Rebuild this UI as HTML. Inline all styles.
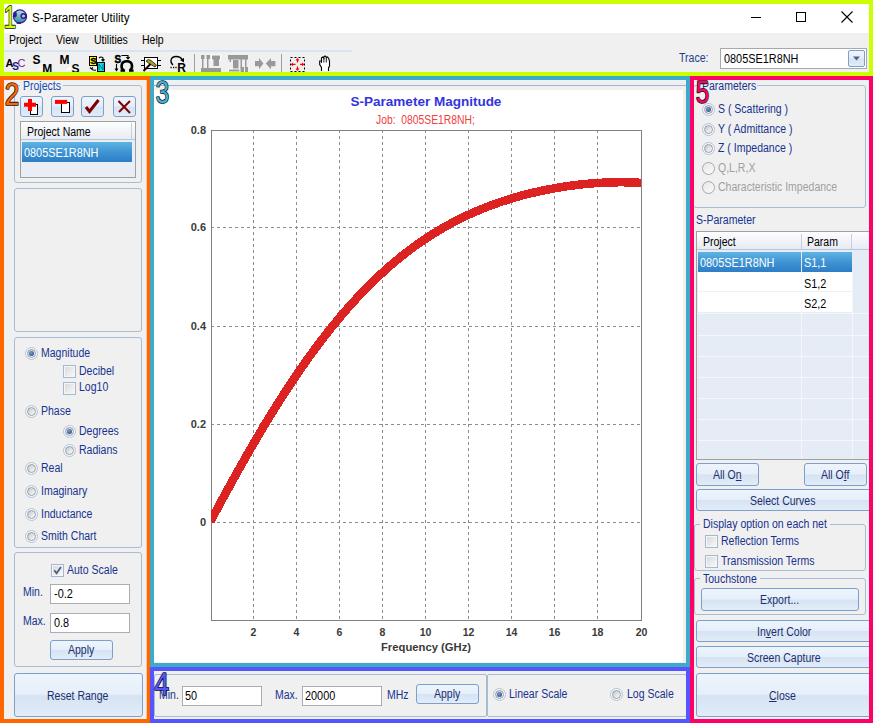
<!DOCTYPE html><html><head><meta charset="utf-8"><style>
*{margin:0;padding:0}
html,body{width:873px;height:723px;overflow:hidden;background:#f0f0f0;position:relative;font-family:"Liberation Sans",sans-serif}
.t{position:absolute;white-space:pre;line-height:1}
u{text-decoration:underline;text-underline-offset:1px}
.r{position:absolute}
.btn{position:absolute;box-sizing:border-box;border:1px solid #7c9fcc;border-radius:3px;
 background:linear-gradient(to bottom,#edf4fc 0%,#e6effa 48%,#d5e3f3 52%,#e3ecf8 100%)}
.radio{position:absolute;width:13px;height:13px;border-radius:50%;box-sizing:border-box;border:1px solid #b0c4dc;background:#f6f8fb}
.radio::after{content:"";position:absolute;left:1px;top:1px;width:9px;height:9px;border-radius:50%;box-sizing:border-box;border:1px solid #9a9ea4;background:linear-gradient(135deg,#c2c4c7 0%,#e4e5e6 55%,#fbfbfb 100%)}
.radio.dis{border:1.3px solid #a8a8a8;background:linear-gradient(135deg,#e6e6e6,#fbfbfb)}
.radio.dis::after{display:none}
.radio.on::before{content:"";position:absolute;z-index:2;left:3px;top:3px;width:5px;height:5px;border-radius:50%;background:radial-gradient(circle at 40% 35%,#7b9ccc 0,#3c64a4 60%,#24407a 100%)}
.chk{position:absolute;width:13px;height:13px;box-sizing:border-box;border:1px solid #a3b8d2;
 background:linear-gradient(135deg,#d8d8d8 0%,#f3f3f3 80%);box-shadow:inset 0 0 0 1px #f6f6f6}
.tb{position:absolute;box-sizing:border-box;border:1px solid #abadb3;background:#fff}
.ov{position:absolute;box-sizing:border-box}
</style></head><body>
<div class="r" style="left:0px;top:0px;width:873px;height:33px;background:#fff"></div>
<svg class="r" style="left:0;top:0" width="40" height="40">
<defs><linearGradient id="gl" x1="0" y1="0" x2="0" y2="1"><stop offset="0" stop-color="#b4e0e4"/><stop offset="1" stop-color="#2a8a98"/></linearGradient></defs>
<circle cx="20" cy="16.5" r="6.6" fill="url(#gl)" stroke="#3a1690" stroke-width="1.1"/>
<ellipse cx="15" cy="14.5" rx="1.8" ry="3" fill="#3a1690"/>
<circle cx="23.5" cy="16" r="2.3" fill="#9ad4dc" stroke="#3a1690" stroke-width="1.5"/>
<ellipse cx="18.8" cy="23" rx="2.6" ry="1.1" fill="#3a1690"/>
</svg>
<div class="t " style="left:32.0px;top:12.00px;font-size:12px;color:#000;transform:scaleX(0.97);transform-origin:0 0;">S-Parameter Utility</div>
<div class="r" style="left:751px;top:17px;width:10px;height:1px;background:#000"></div>
<div class="r" style="left:796px;top:12px;width:10px;height:10px;border:1px solid #000;box-sizing:border-box"></div>
<svg class="r" style="left:841px;top:11px" width="12" height="12" viewBox="0 0 12 12"><path d="M0.5 0.5L11.5 11.5M11.5 0.5L0.5 11.5" stroke="#000" stroke-width="1.1"/></svg>
<div class="t " style="left:8.5px;top:34.00px;font-size:12px;color:#000;transform:scaleX(0.876);transform-origin:0 0;">Project</div>
<div class="t " style="left:56.0px;top:34.00px;font-size:12px;color:#000;transform:scaleX(0.876);transform-origin:0 0;">View</div>
<div class="t " style="left:94.0px;top:34.00px;font-size:12px;color:#000;transform:scaleX(0.876);transform-origin:0 0;">Utilities</div>
<div class="t " style="left:142.0px;top:34.00px;font-size:12px;color:#000;transform:scaleX(0.876);transform-origin:0 0;">Help</div>
<div class="r" style="left:4px;top:50px;width:348px;height:2px;background:#d6e5f5"></div>
<svg class="r" style="left:0;top:52px" width="352" height="20" viewBox="0 52 352 20">
<g font-family="Liberation Sans" font-weight="bold">
<text x="5.6" y="67.2" font-size="11" fill="#000" font-weight="normal" style="font-weight:bold">A</text>
<text x="12.2" y="69.6" font-size="10" fill="#1a1a8c" style="font-weight:bold">S</text>
<text x="17.6" y="67.2" font-size="11" fill="#7a1a9a" font-weight="normal" style="font-weight:normal">C</text>
<text x="32.4" y="63.8" font-size="12" fill="#000">S</text>
<path d="M38 70 L43 66 L43 70Z" fill="#fff"/>
<text x="42.2" y="72.6" font-size="12" fill="#000">M</text>
<text x="59.6" y="63.8" font-size="12" fill="#000">M</text>
<path d="M66 70 L71 66 L71 70Z" fill="#fff"/>
<text x="71.4" y="72.6" font-size="12" fill="#000">S</text>
</g>
<rect x="89.5" y="56.5" width="7" height="9" fill="#ffff00" stroke="#000"/>
<text x="90.2" y="64.4" font-size="9.5" font-family="Liberation Sans" font-weight="bold" fill="#000" stroke="#000" stroke-width="0.4">S</text>
<rect x="97.5" y="62.5" width="7" height="9" fill="#00e8f0" stroke="#000"/>
<path d="M99 64 L99 70 M99 64 L103 70 M103 64 L103 70" stroke="#0a6a7a" stroke-width="1" fill="none"/>
<path d="M99 58 Q101 56 103 58 L103 60.5 M101.5 59.5 L103 61 L104.5 59.5" stroke="#000" stroke-width="1.1" fill="none"/>
<path d="M96 70 Q93 71 91.5 68.5 M90 67.5 L91.5 69 L93 67.5" stroke="#000" stroke-width="1.1" fill="none"/>
<text x="114.6" y="63" font-size="10" font-family="Liberation Sans" font-weight="bold" fill="#000" stroke="#000" stroke-width="0.5">S</text>
<path d="M121.5 55.5 L128 55.5 L128 58 M126.3 57 L128 59 L129.7 57" stroke="#000" stroke-width="1.1" fill="none"/>
<path d="M116.5 64 L116.5 70 M115 68.5 L116.5 70.5 L118 68.5" stroke="#000" stroke-width="1.1" fill="none"/>
<path d="M124 70.3 C120.5 68.5 120.3 61.3 126.8 61.3 C133.3 61.3 133.1 68.5 129.6 70.3" stroke="#000" stroke-width="2.6" fill="none"/><path d="M120.5 70.6h4.6M129 70.6h4.6" stroke="#000" stroke-width="2.4"/>
<path d="M141 60.5h3M141 65.5h3M158 60.5h3M158 65.5h3" stroke="#000" stroke-width="1"/>
<rect x="144.5" y="57.5" width="13" height="11" fill="#fff" stroke="#000"/>
<path d="M146 61 L148.5 59.5 L151 60.5 L156.5 65 L155 67 L151.5 65 L149 63.5 Z" fill="#a8a020" stroke="#000" stroke-width="0.7"/>
<path d="M143.5 71 L150.5 64" stroke="#000" stroke-width="2"/>
<path d="M143.5 71 L150.5 64" stroke="#c00000" stroke-width="0.8" stroke-dasharray="1 1"/>
<path d="M173 65 C169.5 62 170.5 56.5 176 56.5 C179.5 56.5 181.5 58 182.5 60" stroke="#000" stroke-width="1.3" fill="none"/>
<path d="M180 60 L184 62.5 L184 58Z" fill="#000"/>
<path d="M170.5 67.5h1.2M173 67.5h1.2M175.4 67.5h1.2" stroke="#000" stroke-width="1.5"/>
<text x="177.3" y="71.8" font-size="12" font-family="Liberation Sans" font-weight="bold" fill="#000">R</text>
<rect x="194" y="54" width="1" height="18" fill="#a0a0a0"/>
<g fill="#999">
<rect x="201" y="55" width="3.5" height="4"/><rect x="206.5" y="55" width="3.5" height="4"/>
<rect x="211.5" y="55" width="9" height="5" stroke="#fff" stroke-width="1"/>
<rect x="202" y="59" width="1.5" height="9"/><rect x="207" y="59" width="1.5" height="9"/>
<rect x="213.5" y="59" width="5.5" height="7"/>
<rect x="201" y="68" width="20" height="4"/>
<rect x="228" y="55" width="20" height="4.5"/>
<rect x="229.5" y="59" width="1.5" height="3" /><rect x="233" y="60" width="5.5" height="9"/>
<rect x="240.5" y="59" width="1.5" height="9"/><rect x="245" y="59" width="1.5" height="8"/>
<rect x="228.5" y="69" width="11.5" height="3" stroke="#fff" stroke-width="1"/>
<rect x="240.5" y="67" width="3.5" height="5"/><rect x="245" y="67" width="3" height="5"/>
<path d="M255 61 L259 61 L259 58 L263.4 63.6 L259 69.3 L259 66.3 L255 66.3Z"/>
<path d="M275.4 61 L271 61 L271 58 L265.8 63.6 L271 69.3 L271 66.3 L275.4 66.3Z"/>
</g>
<rect x="281" y="54" width="1" height="18" fill="#a0a0a0"/>
<rect x="290.5" y="57.5" width="14" height="14" fill="none" stroke="#000" stroke-width="1" stroke-dasharray="2 2"/>
<g stroke="#f00" stroke-width="1.2" fill="#f00">
<path d="M297.5 59v3.5M291.5 64.4h4M300 64.4h4M297.5 66.5v3.5"/>
</g>
<g fill="#f00"><path d="M295.5 60.5L297.5 58L299.5 60.5Z M295.5 68.5L297.5 71L299.5 68.5Z M293 62.5L290.8 64.4L293 66.3Z M302 62.5L304.3 64.4L302 66.3Z"/></g>
<path d="M321.5 71 L321.5 67.5 L319.7 64.5 L319.7 61 L321.5 61 L321.5 58 L322.7 57 L323.9 58 L323.9 56.7 L325.1 56 L326.3 57 L326.3 57.5 L327.5 57 L328.7 58.5 L329.5 61 L329.5 66 L328.5 68 L328.5 71" stroke="#000" stroke-width="1.1" fill="#fff"/>
<path d="M323.9 58v4.5M326.3 57.5v5M321.5 61v2" stroke="#000" stroke-width="0.9"/>
</svg>
<div class="t " style="left:678.5px;top:52.00px;font-size:12px;color:#1c3c8c;transform:scaleX(0.876);transform-origin:0 0;">Trace:</div>
<div class="r" style="left:720px;top:48px;width:147px;height:21px;border:1px solid #a9a9a9;background:#fff;box-sizing:border-box"></div>
<div class="t " style="left:723.8px;top:53.00px;font-size:12px;color:#000;transform:scaleX(0.9075000000000001);transform-origin:0 0;">0805SE1R8NH</div>
<div class="btn" style="left:848px;top:50px;width:17px;height:17px;border-radius:2px"></div>
<svg class="r" style="left:852px;top:56px" width="9" height="5"><path d="M1 0.5h7L4.5 4.5Z" fill="#4d6185"/></svg>
<div class="r" style="left:14px;top:85px;width:128px;height:98px;border:1px solid #a6bbd6;border-radius:3px;box-sizing:border-box;"></div>
<div class="t " style="left:23.0px;top:80.00px;font-size:12px;color:#1c50b4;transform:scaleX(0.876);transform-origin:0 0;">Projects</div>
<div class="r" style="left:20px;top:82px;width:43px;height:7px;background:#f0f0f0"></div>
<div class="t " style="left:23.0px;top:80.00px;font-size:12px;color:#1c50b4;transform:scaleX(0.876);transform-origin:0 0;">Projects</div>
<div class="btn" style="left:20px;top:96px;width:23px;height:21px"></div>
<div class="btn" style="left:51px;top:96px;width:23px;height:21px"></div>
<div class="btn" style="left:81px;top:96px;width:23px;height:21px"></div>
<div class="btn" style="left:113px;top:96px;width:23px;height:21px"></div>
<svg class="r" style="left:0;top:0" width="150" height="180">
<rect x="30.5" y="104.5" width="7" height="10" fill="#fff" stroke="#000"/>
<path d="M24 104.8h12M30 99v12" stroke="#f00" stroke-width="4"/>
<rect x="61.5" y="102.5" width="8" height="10" fill="#fff" stroke="#000"/>
<path d="M55 101.9h12.2" stroke="#f00" stroke-width="4"/>
<path d="M86 107 L89.5 111.5 L98.5 100" stroke="#800000" stroke-width="3" fill="none"/>
<path d="M118.5 101 L130 113 M130 101 L119 112" stroke="#800000" stroke-width="2" fill="none"/>
</svg>
<div class="r" style="left:20px;top:121px;width:116px;height:57px;border:1px solid #a0a0a0;background:#e9eef6;box-sizing:border-box"></div>
<div class="r" style="left:21px;top:122px;width:114px;height:18px;background:linear-gradient(#fdfdfe,#e8ecf3);border-bottom:1px solid #b9c6d8;box-sizing:border-box"></div>
<div class="r" style="left:131px;top:123px;width:1px;height:16px;background:#c5cfdc"></div>
<div class="t " style="left:27.0px;top:126.00px;font-size:12px;color:#000;transform:scaleX(0.876);transform-origin:0 0;">Project Name</div>
<div class="r" style="left:22px;top:142px;width:110px;height:20px;background:linear-gradient(#5fb4e2,#3f94d3 50%,#2d7dc7)"></div>
<div class="t " style="left:24.2px;top:147.00px;font-size:12px;color:#fff;transform:scaleX(0.9075000000000001);transform-origin:0 0;">0805SE1R8NH</div>
<div class="r" style="left:14px;top:188px;width:128px;height:144px;border:1px solid #a6bbd6;border-radius:3px;box-sizing:border-box;"></div>
<div class="r" style="left:14px;top:337px;width:128px;height:211px;border:1px solid #a6bbd6;border-radius:3px;box-sizing:border-box;"></div>
<div class="radio on" style="left:24.9px;top:346.8px"></div>
<div class="t " style="left:41.0px;top:347.00px;font-size:12px;color:#16338f;transform:scaleX(0.876);transform-origin:0 0;">Magnitude</div>
<div class="chk" style="left:63px;top:365px"></div>
<div class="t " style="left:78.8px;top:365.00px;font-size:12px;color:#16338f;transform:scaleX(0.876);transform-origin:0 0;">Decibel</div>
<div class="chk" style="left:63px;top:382px"></div>
<div class="t " style="left:78.8px;top:381.00px;font-size:12px;color:#16338f;transform:scaleX(0.876);transform-origin:0 0;">Log10</div>
<div class="radio" style="left:24.9px;top:405.0px"></div>
<div class="t " style="left:41.0px;top:405.00px;font-size:12px;color:#16338f;transform:scaleX(0.876);transform-origin:0 0;">Phase</div>
<div class="radio on" style="left:62.9px;top:424.5px"></div>
<div class="t " style="left:78.8px;top:425.00px;font-size:12px;color:#16338f;transform:scaleX(0.876);transform-origin:0 0;">Degrees</div>
<div class="radio" style="left:62.9px;top:443.5px"></div>
<div class="t " style="left:78.8px;top:444.00px;font-size:12px;color:#16338f;transform:scaleX(0.876);transform-origin:0 0;">Radians</div>
<div class="radio" style="left:24.9px;top:462.0px"></div>
<div class="t " style="left:41.0px;top:462.00px;font-size:12px;color:#16338f;transform:scaleX(0.876);transform-origin:0 0;">Real</div>
<div class="radio" style="left:24.9px;top:484.8px"></div>
<div class="t " style="left:41.0px;top:485.00px;font-size:12px;color:#16338f;transform:scaleX(0.876);transform-origin:0 0;">Imaginary</div>
<div class="radio" style="left:24.9px;top:507.5px"></div>
<div class="t " style="left:41.0px;top:508.00px;font-size:12px;color:#16338f;transform:scaleX(0.876);transform-origin:0 0;">Inductance</div>
<div class="radio" style="left:24.9px;top:529.8px"></div>
<div class="t " style="left:41.0px;top:530.00px;font-size:12px;color:#16338f;transform:scaleX(0.876);transform-origin:0 0;">Smith Chart</div>
<div class="r" style="left:14px;top:552px;width:128px;height:115px;border:1px solid #a6bbd6;border-radius:3px;box-sizing:border-box;"></div>
<div class="chk" style="left:51px;top:564px"></div>
<svg class="r" style="left:53px;top:566px" width="9" height="9"><path d="M1.2 4.2 L3.6 7.2 L8 1" stroke="#4a5f85" stroke-width="1.8" fill="none"/></svg>
<div class="t " style="left:67.3px;top:564.00px;font-size:12px;color:#16338f;transform:scaleX(0.876);transform-origin:0 0;">Auto Scale</div>
<div class="t " style="left:23.4px;top:586.00px;font-size:12px;color:#16338f;transform:scaleX(0.876);transform-origin:0 0;">Min.</div>
<div class="tb" style="left:50px;top:584px;width:80px;height:20px"></div>
<div class="t " style="left:54.0px;top:588.00px;font-size:12px;color:#000;transform:scaleX(0.9075000000000001);transform-origin:0 0;">-0.2</div>
<div class="t " style="left:23.4px;top:615.00px;font-size:12px;color:#16338f;transform:scaleX(0.876);transform-origin:0 0;">Max.</div>
<div class="tb" style="left:50px;top:613px;width:80px;height:20px"></div>
<div class="t " style="left:53.8px;top:617.00px;font-size:12px;color:#000;transform:scaleX(0.9075000000000001);transform-origin:0 0;">0.8</div>
<div class="btn" style="left:50px;top:640px;width:63px;height:20px;"></div>
<div class="t " style="left:68.0px;top:644.00px;font-size:12px;color:#1c2f6e;transform:scaleX(0.876);transform-origin:0 0;">Apply</div>
<div class="btn" style="left:14px;top:673px;width:129px;height:44px;"></div>
<div class="t " style="left:47.4px;top:690.00px;font-size:12px;color:#1c2f6e;transform:scaleX(0.876);transform-origin:0 0;">Reset Range</div>
<div class="r" style="left:150px;top:76px;width:540px;height:591px;background:#f0f0f0"></div>
<div class="r" style="left:154px;top:85px;width:532px;height:1px;background:#9fb5d5"></div>
<div class="r" style="left:154px;top:90px;width:529px;height:572px;background:#fff"></div>
<div class="t " style="left:350.6px;top:95.37px;font-size:13.5px;color:#3434dc;font-weight:bold;">S-Parameter Magnitude</div>
<div class="t " style="left:375.5px;top:114.00px;font-size:12px;color:#f04040;transform:scaleX(0.8616666666666667);transform-origin:0 0;">Job:  0805SE1R8NH;</div>
<svg class="r" style="left:0;top:0" width="873" height="723">
<path d="M253.5 130V620" stroke="#8c8c8c" stroke-width="1" stroke-dasharray="3 3" />
<path d="M296.5 130V620" stroke="#8c8c8c" stroke-width="1" stroke-dasharray="3 3" />
<path d="M339.5 130V620" stroke="#8c8c8c" stroke-width="1" stroke-dasharray="3 3" />
<path d="M382.5 130V620" stroke="#8c8c8c" stroke-width="1" stroke-dasharray="3 3" />
<path d="M425.5 130V620" stroke="#8c8c8c" stroke-width="1" stroke-dasharray="3 3" />
<path d="M468.5 130V620" stroke="#8c8c8c" stroke-width="1" stroke-dasharray="3 3" />
<path d="M511.5 130V620" stroke="#8c8c8c" stroke-width="1" stroke-dasharray="3 3" />
<path d="M554.5 130V620" stroke="#8c8c8c" stroke-width="1" stroke-dasharray="3 3" />
<path d="M597.5 130V620" stroke="#8c8c8c" stroke-width="1" stroke-dasharray="3 3" />
<path d="M211 227.5H641" stroke="#8c8c8c" stroke-width="1" stroke-dasharray="3 3" />
<path d="M211 326.5H641" stroke="#8c8c8c" stroke-width="1" stroke-dasharray="3 3" />
<path d="M211 424.5H641" stroke="#8c8c8c" stroke-width="1" stroke-dasharray="3 3" />
<path d="M211 522.5H641" stroke="#8c8c8c" stroke-width="1" stroke-dasharray="3 3" />
<rect x="211.5" y="130.5" width="430" height="490" fill="none" stroke="#808080" stroke-width="1"/>
<clipPath id="pc"><rect x="211" y="130" width="430" height="490"/></clipPath>
<path d="M210.27 521.75 L213.02 516.61 L215.76 511.48 L218.51 506.38 L221.25 501.29 L224.00 496.23 L226.75 491.20 L229.49 486.19 L232.24 481.21 L234.99 476.25 L237.73 471.33 L240.48 466.44 L243.22 461.58 L245.97 456.75 L248.72 451.96 L251.46 447.20 L254.21 442.48 L256.96 437.80 L259.70 433.15 L262.45 428.55 L265.19 423.98 L267.94 419.46 L270.69 414.98 L273.43 410.53 L276.18 406.14 L278.93 401.78 L281.67 397.47 L284.42 393.21 L287.16 388.99 L289.91 384.82 L292.66 380.69 L295.40 376.61 L298.15 372.57 L300.90 368.59 L303.64 364.65 L306.39 360.76 L309.13 356.92 L311.88 353.13 L314.63 349.38 L317.37 345.69 L320.12 342.05 L322.87 338.45 L325.61 334.91 L328.36 331.41 L331.10 327.96 L333.85 324.57 L336.60 321.22 L339.34 317.93 L342.09 314.68 L344.84 311.48 L347.58 308.33 L350.33 305.24 L353.07 302.19 L355.82 299.19 L358.57 296.24 L361.31 293.34 L364.06 290.49 L366.81 287.68 L369.55 284.93 L372.30 282.22 L375.04 279.56 L377.79 276.95 L380.54 274.39 L383.28 271.87 L386.03 269.40 L388.78 266.97 L391.52 264.59 L394.27 262.26 L397.01 259.97 L399.76 257.73 L402.51 255.53 L405.25 253.37 L408.00 251.26 L410.75 249.19 L413.49 247.16 L416.24 245.17 L418.98 243.23 L421.73 241.33 L424.48 239.46 L427.22 237.64 L429.97 235.86 L432.72 234.12 L435.46 232.41 L438.21 230.74 L440.95 229.12 L443.70 227.52 L446.45 225.97 L449.19 224.45 L451.94 222.96 L454.69 221.51 L457.43 220.10 L460.18 218.72 L462.92 217.37 L465.67 216.06 L468.42 214.77 L471.16 213.52 L473.91 212.30 L476.66 211.11 L479.40 209.96 L482.15 208.83 L484.89 207.73 L487.64 206.66 L490.39 205.61 L493.13 204.60 L495.88 203.61 L498.63 202.65 L501.37 201.72 L504.12 200.81 L506.86 199.93 L509.61 199.07 L512.36 198.24 L515.10 197.43 L517.85 196.64 L520.60 195.88 L523.34 195.14 L526.09 194.43 L528.83 193.74 L531.58 193.07 L534.33 192.42 L537.07 191.79 L539.82 191.18 L542.57 190.60 L545.31 190.03 L548.06 189.49 L550.80 188.96 L553.55 188.46 L556.30 187.97 L559.04 187.51 L561.79 187.06 L564.54 186.64 L567.28 186.23 L570.03 185.84 L572.77 185.48 L575.52 185.13 L578.27 184.80 L581.01 184.49 L583.76 184.20 L586.51 183.93 L589.25 183.67 L592.00 183.44 L594.74 183.23 L597.49 183.04 L600.24 182.86 L602.98 182.71 L605.73 182.58 L608.48 182.47 L611.22 182.38 L613.97 182.31 L616.71 182.27 L619.46 182.24 L622.21 182.24 L624.95 182.27 L627.70 182.31 L630.45 182.38 L633.19 182.48 L635.94 182.60 L638.68 182.75 L641.43 182.93 L644.18 183.13 L646.92 183.36" stroke="#dd2222" stroke-width="8.5" fill="none" clip-path="url(#pc)" shape-rendering="crispEdges"/>
</svg>
<div class="t" style="left:150px;width:56px;text-align:right;top:124.7px;font-size:11px;font-weight:bold;color:#3a3a3a">0.8</div>
<div class="t" style="left:150px;width:56px;text-align:right;top:221.7px;font-size:11px;font-weight:bold;color:#3a3a3a">0.6</div>
<div class="t" style="left:150px;width:56px;text-align:right;top:320.7px;font-size:11px;font-weight:bold;color:#3a3a3a">0.4</div>
<div class="t" style="left:150px;width:56px;text-align:right;top:418.7px;font-size:11px;font-weight:bold;color:#3a3a3a">0.2</div>
<div class="t" style="left:150px;width:56px;text-align:right;top:516.7px;font-size:11px;font-weight:bold;color:#3a3a3a">0</div>
<div class="t" style="left:233px;width:41px;text-align:center;top:627.1px;font-size:10.5px;font-weight:bold;color:#3a3a3a">2</div>
<div class="t" style="left:276px;width:41px;text-align:center;top:627.1px;font-size:10.5px;font-weight:bold;color:#3a3a3a">4</div>
<div class="t" style="left:319px;width:41px;text-align:center;top:627.1px;font-size:10.5px;font-weight:bold;color:#3a3a3a">6</div>
<div class="t" style="left:362px;width:41px;text-align:center;top:627.1px;font-size:10.5px;font-weight:bold;color:#3a3a3a">8</div>
<div class="t" style="left:405px;width:41px;text-align:center;top:627.1px;font-size:10.5px;font-weight:bold;color:#3a3a3a">10</div>
<div class="t" style="left:448px;width:41px;text-align:center;top:627.1px;font-size:10.5px;font-weight:bold;color:#3a3a3a">12</div>
<div class="t" style="left:491px;width:41px;text-align:center;top:627.1px;font-size:10.5px;font-weight:bold;color:#3a3a3a">14</div>
<div class="t" style="left:534px;width:41px;text-align:center;top:627.1px;font-size:10.5px;font-weight:bold;color:#3a3a3a">16</div>
<div class="t" style="left:577px;width:41px;text-align:center;top:627.1px;font-size:10.5px;font-weight:bold;color:#3a3a3a">18</div>
<div class="t" style="left:621px;width:41px;text-align:center;top:627.1px;font-size:10.5px;font-weight:bold;color:#3a3a3a">20</div>
<div class="t " style="left:381.0px;top:642.28px;font-size:11.25px;color:#3a3a3a;font-weight:bold;">Frequency (GHz)</div>
<div class="r" style="left:154px;top:671px;width:532px;height:48px;background:#f0f0f0"></div>
<div class="r" style="left:154px;top:674px;width:333px;height:43px;border:1px solid #a6bbd6;border-radius:2px;box-sizing:border-box"></div>
<div class="r" style="left:487px;top:674px;width:200px;height:43px;border:1px solid #a6bbd6;border-radius:2px;box-sizing:border-box"></div>
<div class="t " style="left:158.5px;top:689.00px;font-size:12px;color:#16338f;transform:scaleX(0.876);transform-origin:0 0;">Min.</div>
<div class="tb" style="left:182px;top:686px;width:80px;height:20px"></div>
<div class="t " style="left:185.2px;top:690.00px;font-size:12px;color:#000;transform:scaleX(0.9075000000000001);transform-origin:0 0;">50</div>
<div class="t " style="left:275.2px;top:689.00px;font-size:12px;color:#16338f;transform:scaleX(0.876);transform-origin:0 0;">Max.</div>
<div class="tb" style="left:302px;top:686px;width:80px;height:20px"></div>
<div class="t " style="left:304.8px;top:690.00px;font-size:12px;color:#000;transform:scaleX(0.9075000000000001);transform-origin:0 0;">20000</div>
<div class="t " style="left:386.5px;top:689.00px;font-size:12px;color:#16338f;transform:scaleX(0.876);transform-origin:0 0;">MHz</div>
<div class="btn" style="left:416px;top:684px;width:63px;height:20px;"></div>
<div class="t " style="left:433.8px;top:688.00px;font-size:12px;color:#1c2f6e;transform:scaleX(0.876);transform-origin:0 0;">Apply</div>
<div class="radio on" style="left:492.9px;top:687.8px"></div>
<div class="t " style="left:509.3px;top:688.00px;font-size:12px;color:#16338f;transform:scaleX(0.876);transform-origin:0 0;">Linear Scale</div>
<div class="radio" style="left:609.7px;top:687.8px"></div>
<div class="t " style="left:626.5px;top:688.00px;font-size:12px;color:#16338f;transform:scaleX(0.876);transform-origin:0 0;">Log Scale</div>
<div class="r" style="left:693px;top:85px;width:173px;height:123px;border:1px solid #a6bbd6;border-radius:3px;box-sizing:border-box;"></div>
<div class="r" style="left:700px;top:80px;width:57px;height:10px;background:#f0f0f0"></div>
<div class="t " style="left:701.5px;top:80.00px;font-size:12px;color:#16338f;transform:scaleX(0.876);transform-origin:0 0;">Parameters</div>
<div class="radio on" style="left:701.9px;top:102.6px"></div>
<div class="t " style="left:718.2px;top:103.00px;font-size:12px;color:#16338f;transform:scaleX(0.876);transform-origin:0 0;">S ( Scattering )</div>
<div class="radio" style="left:701.9px;top:122.8px"></div>
<div class="t " style="left:718.2px;top:123.00px;font-size:12px;color:#16338f;transform:scaleX(0.876);transform-origin:0 0;">Y ( Admittance )</div>
<div class="radio" style="left:701.9px;top:141.9px"></div>
<div class="t " style="left:718.2px;top:142.00px;font-size:12px;color:#16338f;transform:scaleX(0.876);transform-origin:0 0;">Z ( Impedance )</div>
<div class="radio dis" style="left:701.9px;top:161.5px"></div>
<div class="t " style="left:718.2px;top:162.00px;font-size:12px;color:#a0a0a0;transform:scaleX(0.876);transform-origin:0 0;">Q,L,R,X</div>
<div class="radio dis" style="left:701.9px;top:180.5px"></div>
<div class="t " style="left:718.2px;top:181.00px;font-size:12px;color:#a0a0a0;transform:scaleX(0.876);transform-origin:0 0;">Characteristic Impedance</div>
<div class="t " style="left:696.3px;top:214.00px;font-size:12px;color:#16338f;transform:scaleX(0.876);transform-origin:0 0;">S-Parameter</div>
<div class="r" style="left:696px;top:231px;width:177px;height:229px;border:1px solid #a0a0a0;background:#e6ecf5;box-sizing:border-box"></div>
<div class="r" style="left:697px;top:232px;width:176px;height:18px;background:linear-gradient(#fdfdfe,#e6ebf3);border-bottom:1px solid #b9c6d8;box-sizing:border-box"></div>
<div class="r" style="left:801px;top:234px;width:1px;height:15px;background:#c5cfdc"></div>
<div class="r" style="left:851px;top:234px;width:1px;height:15px;background:#c5cfdc"></div>
<div class="t " style="left:703.0px;top:236.00px;font-size:12px;color:#000;transform:scaleX(0.876);transform-origin:0 0;">Project</div>
<div class="t " style="left:807.2px;top:236.00px;font-size:12px;color:#000;transform:scaleX(0.876);transform-origin:0 0;">Param</div>
<div class="r" style="left:698px;top:252px;width:103px;height:20px;background:linear-gradient(#5fb4e2,#3f94d3 50%,#2d7dc7)"></div>
<div class="r" style="left:802px;top:252px;width:50px;height:20px;background:linear-gradient(#5fb4e2,#3f94d3 50%,#2d7dc7)"></div>
<div class="r" style="left:698px;top:272px;width:103px;height:20px;background:#fff"></div>
<div class="r" style="left:802px;top:272px;width:50px;height:20px;background:#fff"></div>
<div class="r" style="left:698px;top:292px;width:103px;height:20px;background:#fff"></div>
<div class="r" style="left:802px;top:292px;width:50px;height:20px;background:#fff"></div>
<div class="r" style="left:698px;top:291px;width:154px;height:1px;background:#f0f0f0"></div>
<div class="r" style="left:698px;top:313px;width:171px;height:1px;background:#f4f6fa"></div>
<div class="r" style="left:698px;top:335px;width:171px;height:1px;background:#f4f6fa"></div>
<div class="r" style="left:698px;top:356px;width:171px;height:1px;background:#f4f6fa"></div>
<div class="r" style="left:698px;top:377px;width:171px;height:1px;background:#f4f6fa"></div>
<div class="r" style="left:698px;top:398px;width:171px;height:1px;background:#f4f6fa"></div>
<div class="r" style="left:698px;top:419px;width:171px;height:1px;background:#f4f6fa"></div>
<div class="r" style="left:698px;top:440px;width:171px;height:1px;background:#f4f6fa"></div>
<div class="r" style="left:801px;top:272px;width:1px;height:187px;background:#f4f6fa"></div>
<div class="r" style="left:852px;top:272px;width:1px;height:187px;background:#f4f6fa"></div>
<div class="t " style="left:700.3px;top:257.00px;font-size:12px;color:#fff;transform:scaleX(0.9075000000000001);transform-origin:0 0;">0805SE1R8NH</div>
<div class="t " style="left:804.2px;top:257.00px;font-size:12px;color:#fff;transform:scaleX(0.9075000000000001);transform-origin:0 0;">S1,1</div>
<div class="t " style="left:804.2px;top:278.00px;font-size:12px;color:#000;transform:scaleX(0.9075000000000001);transform-origin:0 0;">S1,2</div>
<div class="t " style="left:804.2px;top:298.00px;font-size:12px;color:#000;transform:scaleX(0.9075000000000001);transform-origin:0 0;">S2,2</div>
<div class="btn" style="left:696px;top:463px;width:63px;height:23px;"></div>
<div class="t " style="left:713.0px;top:469.00px;font-size:12px;color:#1c2f6e;transform:scaleX(0.876);transform-origin:0 0;">All O<u>n</u></div>
<div class="btn" style="left:804px;top:463px;width:63px;height:23px;"></div>
<div class="t " style="left:821.0px;top:469.00px;font-size:12px;color:#1c2f6e;transform:scaleX(0.876);transform-origin:0 0;">All O<u>f</u>f</div>
<div class="btn" style="left:696px;top:489px;width:177px;height:22px;"></div>
<div class="t " style="left:750.0px;top:495.00px;font-size:12px;color:#1c2f6e;transform:scaleX(0.876);transform-origin:0 0;">Select Curves</div>
<div class="r" style="left:694px;top:524px;width:172px;height:47px;border:1px solid #a6bbd6;border-radius:3px;box-sizing:border-box;"></div>
<div class="r" style="left:700px;top:518px;width:130px;height:10px;background:#f0f0f0"></div>
<div class="t " style="left:702.8px;top:518.00px;font-size:12px;color:#16338f;transform:scaleX(0.876);transform-origin:0 0;">Display option on each net</div>
<div class="chk" style="left:705px;top:535px"></div>
<div class="t " style="left:721.2px;top:535.00px;font-size:12px;color:#16338f;transform:scaleX(0.876);transform-origin:0 0;">Reflection Terms</div>
<div class="chk" style="left:705px;top:555px"></div>
<div class="t " style="left:721.2px;top:555.00px;font-size:12px;color:#16338f;transform:scaleX(0.876);transform-origin:0 0;">Transmission Terms</div>
<div class="r" style="left:694px;top:578px;width:172px;height:37px;border:1px solid #a6bbd6;border-radius:3px;box-sizing:border-box;"></div>
<div class="r" style="left:700px;top:572px;width:60px;height:10px;background:#f0f0f0"></div>
<div class="t " style="left:702.8px;top:573.00px;font-size:12px;color:#16338f;transform:scaleX(0.876);transform-origin:0 0;">Touchstone</div>
<div class="btn" style="left:701px;top:588px;width:158px;height:23px;"></div>
<div class="t " style="left:760.0px;top:594.00px;font-size:12px;color:#1c2f6e;transform:scaleX(0.876);transform-origin:0 0;">Export...</div>
<div class="btn" style="left:696px;top:620px;width:177px;height:22px;"></div>
<div class="t " style="left:756.6px;top:626.00px;font-size:12px;color:#1c2f6e;transform:scaleX(0.876);transform-origin:0 0;">In<u>v</u>ert Color</div>
<div class="btn" style="left:696px;top:646px;width:177px;height:22px;"></div>
<div class="t " style="left:746.5px;top:652.00px;font-size:12px;color:#1c2f6e;transform:scaleX(0.876);transform-origin:0 0;">Screen Capture</div>
<div class="btn" style="left:696px;top:673px;width:177px;height:44px;"></div>
<div class="t " style="left:769.0px;top:690.00px;font-size:12px;color:#1c2f6e;transform:scaleX(0.876);transform-origin:0 0;"><u>C</u>lose</div>
<div class="ov" style="left:0px;top:0px;width:873px;height:76px;border:4px solid #ccff00"></div>
<div class="ov" style="left:0px;top:76px;width:150px;height:647px;border:4px solid #ff6600"></div>
<div class="r" style="left:146px;top:80px;width:1px;height:639px;background:#f6c8a8"></div>
<div class="r" style="left:146px;top:76px;width:1px;height:4px;background:#ff6600"></div>
<div class="r" style="left:146px;top:719px;width:1px;height:4px;background:#ff6600"></div>
<div class="ov" style="left:150px;top:76px;width:540px;height:591px;border:4px solid #3fa9c9"></div>
<div class="ov" style="left:150px;top:667px;width:540px;height:56px;border:4px solid #5555ff"></div>
<div class="ov" style="left:690px;top:76px;width:183px;height:647px;border:4px solid #ff0066"></div>
<svg class="r" style="left:0;top:0" width="873" height="723"><text transform="translate(3.5,28.3) scale(0.74,1)" font-family="Liberation Sans" font-size="31" fill="#ccff00" stroke="#111" stroke-width="1.6" paint-order="stroke" stroke-linejoin="round">1</text></svg>
<svg class="r" style="left:0;top:0" width="873" height="723"><text transform="translate(4.8,104.5) scale(0.84,1)" font-family="Liberation Sans" font-size="31" fill="#ff6600" stroke="#111" stroke-width="1.6" paint-order="stroke" stroke-linejoin="round">2</text></svg>
<svg class="r" style="left:0;top:0" width="873" height="723"><text transform="translate(155.7,103) scale(0.78,1)" font-family="Liberation Sans" font-size="31" fill="#3fb4d8" stroke="#111" stroke-width="1.6" paint-order="stroke" stroke-linejoin="round">3</text></svg>
<svg class="r" style="left:0;top:0" width="873" height="723"><text transform="translate(154.3,694.6) scale(0.86,1)" font-family="Liberation Sans" font-size="31" fill="#5555ff" stroke="#111" stroke-width="1.6" paint-order="stroke" stroke-linejoin="round">4</text></svg>
<svg class="r" style="left:0;top:0" width="873" height="723"><text transform="translate(695.8,102.7) scale(0.78,1)" font-family="Liberation Sans" font-size="31" fill="#ff0066" stroke="#111" stroke-width="1.6" paint-order="stroke" stroke-linejoin="round">5</text></svg>
<!--REST-->
</body></html>
